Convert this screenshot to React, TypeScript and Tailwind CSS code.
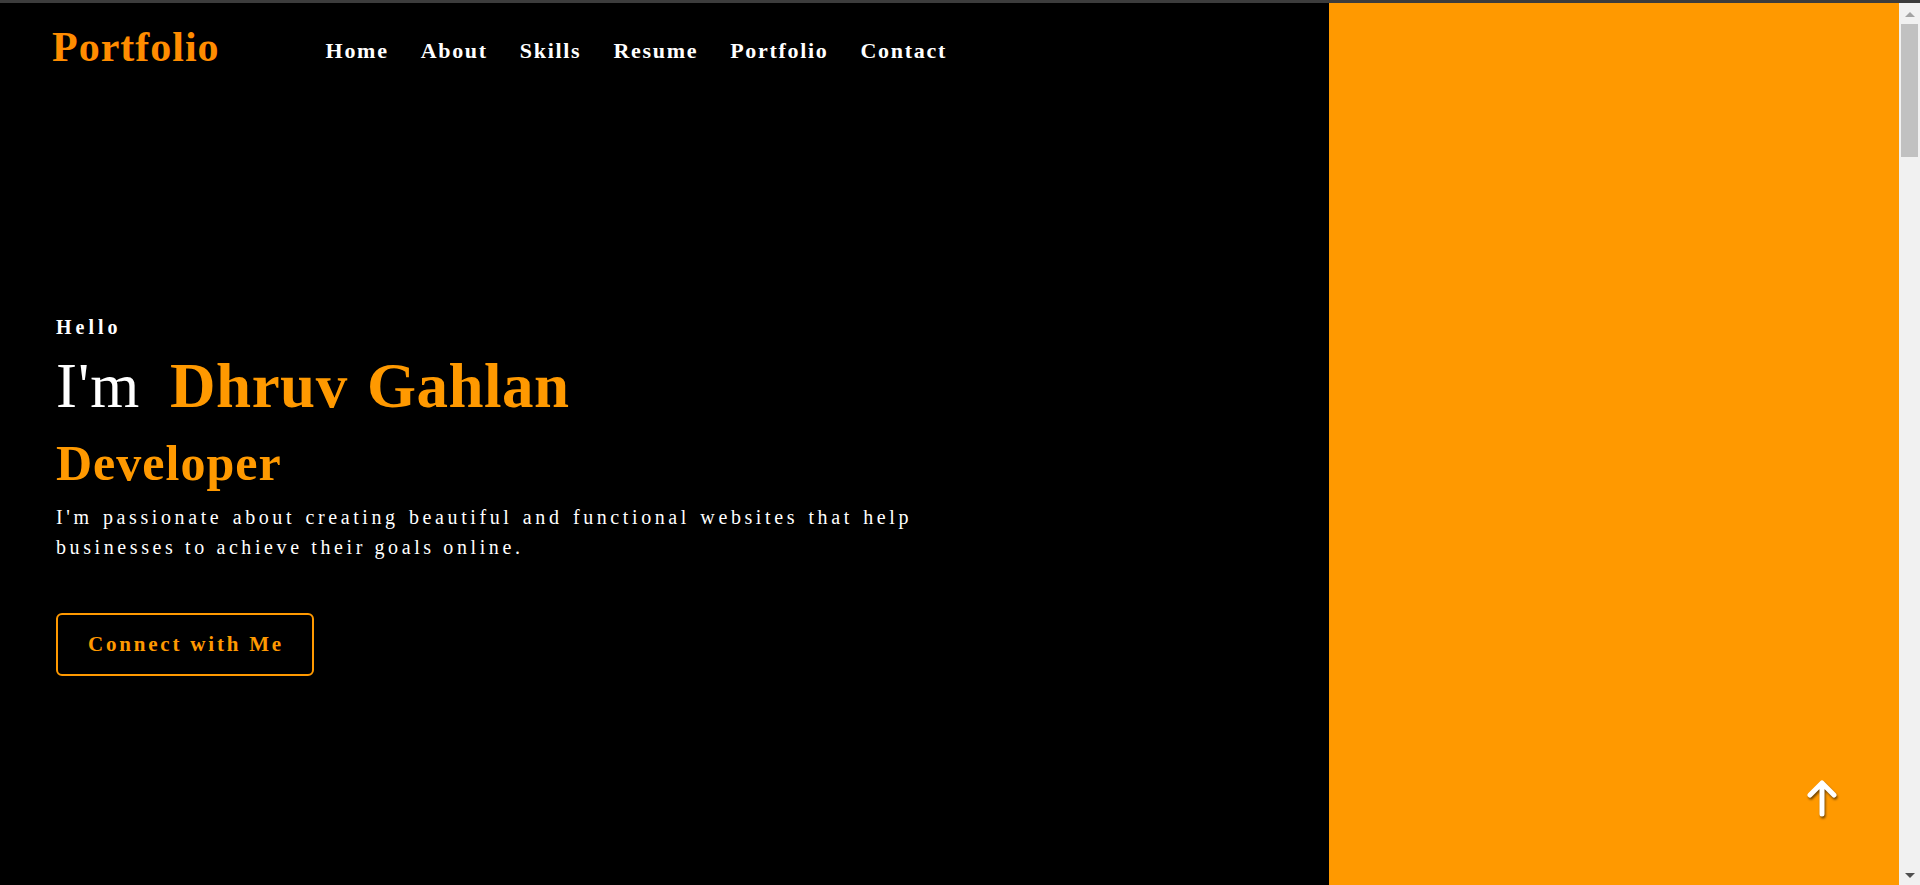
import { useState } from "react";

const NAV_LINKS = ["Home", "About", "Skills", "Resume", "Portfolio", "Contact"];

const serif = "font-['Liberation_Serif','Times_New_Roman',serif]";

function ScrollTopButton() {
  return (
    <button
      aria-label="Back to top"
      className="absolute right-[59px] bottom-[66px] drop-shadow-[1px_2px_1px_rgba(0,0,0,0.55)]"
    >
      <svg width="36" height="40" viewBox="0 0 36 40" fill="none">
        <path
          d="M6 16 18 4 30 16M18 4v31"
          stroke="#fff"
          strokeWidth="5"
          strokeLinecap="round"
          strokeLinejoin="round"
        />
      </svg>
    </button>
  );
}

// classic window scrollbar, as seen along the right edge
function Scrollbar() {
  return (
    <aside className="flex w-[21px] shrink-0 flex-col items-center bg-[#f1f1f1]">
      <div className="flex h-[21px] justify-center pt-[9px]">
        <div className="h-0 w-0 border-x-[5px] border-b-[5px] border-x-transparent border-b-[#a3a3a3]" />
      </div>
      <div className="h-[133px] w-[17px] bg-[#c1c1c1]" />
      <div className="flex-1" />
      <div className="flex h-[21px] justify-center pt-[9px]">
        <div className="h-0 w-0 border-x-[5px] border-t-[5px] border-x-transparent border-t-[#505050]" />
      </div>
    </aside>
  );
}

export default function App() {
  const [active, setActive] = useState("Home");

  return (
    <div className={`flex h-screen flex-col bg-black ${serif}`}>
      {/* thin window edge */}
      <div className="h-[3px] shrink-0 bg-[#3c3c3c]" />

      <div className="flex min-h-0 flex-1">
        <main className="flex-1 overflow-y-auto [scrollbar-width:none] [&::-webkit-scrollbar]:hidden">
          {/* Hero */}
          <section className="flex h-[882px]">
            <div className="w-[1329px] shrink-0 bg-black">
              <nav className="flex items-start pl-[52px] pt-[23px]">
                <a href="#" className="text-[42px] font-bold leading-none tracking-[1px] text-[#ff8c00]">
                  Portfolio
                </a>
                <ul className="ml-[106px] mt-[14px] flex gap-8">
                  {NAV_LINKS.map((link) => (
                    <li key={link}>
                      <a
                        href="#"
                        onClick={() => setActive(link)}
                        className={`text-[22px] font-bold leading-none tracking-[1.7px] text-white ${
                          active === link ? "underline-offset-4" : ""
                        }`}
                      >
                        {link}
                      </a>
                    </li>
                  ))}
                </ul>
              </nav>

              <div className="pl-[56px] pt-[249px]">
                <h3 className="text-[20px] font-bold leading-none tracking-[4px] text-white">Hello</h3>
                <h1 className="mt-[18px] text-[63px] leading-none tracking-[1px] text-white">
                  I'm{" "}
                  <span className="ml-[13px] font-bold tracking-[0.5px] text-[#ff9900] [word-spacing:3px]">
                    Dhruv Gahlan
                  </span>
                </h1>
                <h2 className="mt-[20px] text-[50px] font-bold leading-none tracking-[1px] text-[#ff9900]">
                  Developer
                </h2>
                <p className="mt-[14px] w-[856px] text-justify text-[20px] leading-[30px] tracking-[3.6px] text-white">
                  I'm passionate about creating beautiful and functional websites that help businesses to
                  achieve their goals online.
                </p>
                <button className="mt-[51px] flex h-[63px] w-[258px] items-center rounded-md border-2 border-[#ff9900] pl-[30px] text-[21px] font-bold leading-none tracking-[2.8px] text-[#ff9900]">
                  Connect with Me
                </button>
              </div>
            </div>

            <div className="relative flex-1 bg-[#ff9900]">
              <ScrollTopButton />
            </div>
          </section>

          {/* rest of the page below the fold */}
          <section className="h-[4740px] bg-black" />
        </main>

        <Scrollbar />
      </div>
    </div>
  );
}
